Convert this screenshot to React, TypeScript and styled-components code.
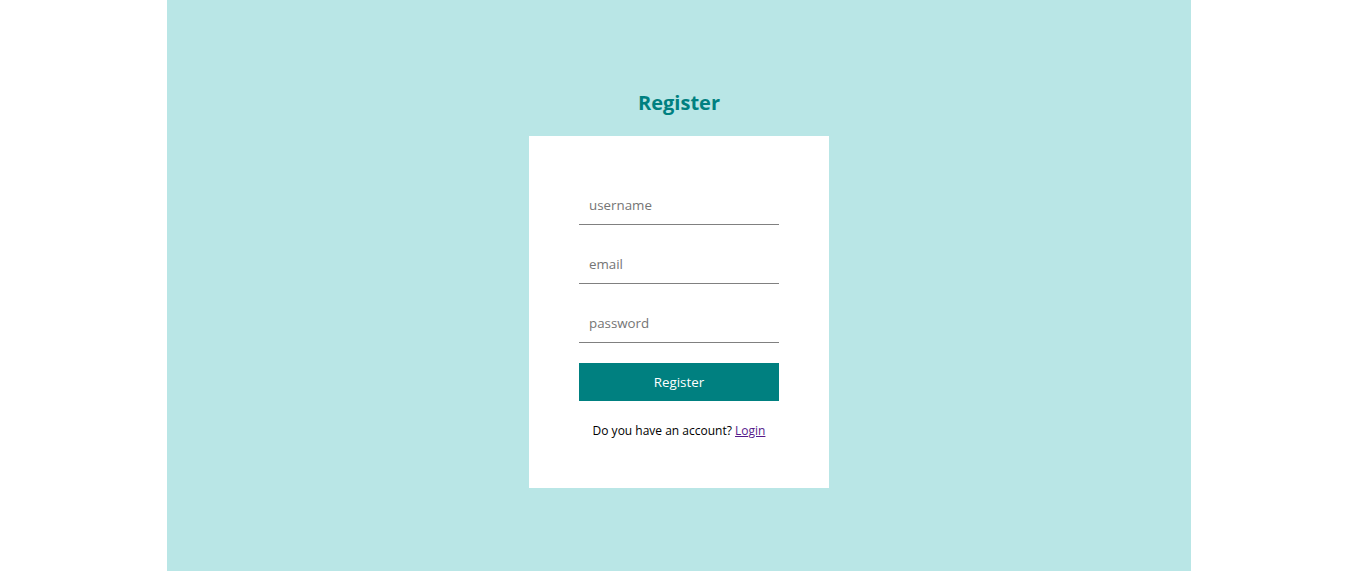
import React from "react";
import styled, { createGlobalStyle } from "styled-components";

const Global = createGlobalStyle`
  html, body { margin: 0; padding: 0; background: #ffffff; }
  body { font-family: "Open Sans", "Liberation Sans", sans-serif; }
`;

const Page = styled.div`
  width: 1024px;
  min-height: 571px;
  margin-left: calc(50% - 513.5px);
  background: #b9e6e6;
  display: flex;
  flex-direction: column;
  align-items: center;
  padding-top: 89px;
  box-sizing: border-box;
`;

const Title = styled.h2`
  margin: 0 0 20px;
  font-size: 20px;
  line-height: 27px;
  font-weight: 700;
  color: #008080;
`;

const Card = styled.form`
  width: 300px;
  box-sizing: border-box;
  background: #ffffff;
  padding: 50px 50px 48px;
  display: flex;
  flex-direction: column;
  gap: 20px;
`;

const Input = styled.input`
  height: 39px;
  box-sizing: border-box;
  border: none;
  border-bottom: 1px solid #808080;
  padding: 0 10px;
  font-family: "Open Sans", "Liberation Sans", sans-serif;
  font-size: 13.33px;
  outline: none;
  background: transparent;
  &::placeholder { color: #757575; }
`;

const Button = styled.button`
  height: 38px;
  border: none;
  background: #008080;
  color: #ffffff;
  font-family: "Open Sans", "Liberation Sans", sans-serif;
  font-size: 13.33px;
  cursor: pointer;
`;

const Note = styled.p`
  margin: 1px 0 0;
  text-align: center;
  font-size: 12px;
  line-height: 18px;
  color: #000000;
  a { color: #551a8b; }
`;

export default function App() {
  return (
    <>
      <Global />
      <Page>
        <Title>Register</Title>
        <Card onSubmit={(e) => e.preventDefault()}>
          <Input placeholder="username" />
          <Input placeholder="email" />
          <Input placeholder="password" type="password" />
          <Button type="submit">Register</Button>
          <Note>
            Do you have an account? <a href="#">Login</a>
          </Note>
        </Card>
      </Page>
    </>
  );
}
